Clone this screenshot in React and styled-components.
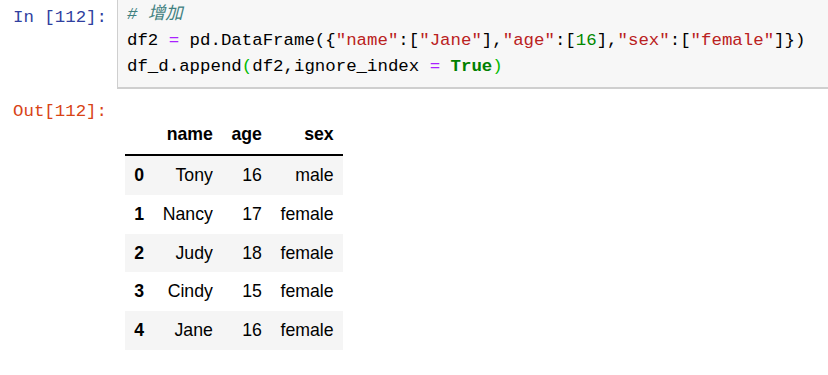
import styled, {createGlobalStyle} from 'styled-components';

const GlobalStyle = createGlobalStyle`
body{
  margin: 0;
  background: #fff;
  overflow: hidden;
}
`;

const Notebook = styled.div`
margin-top: -6px;
width: 840px;
`;

const CellRow = styled.div`
display: flex;
align-items: flex-start;
`;

const Prompt = styled.div`
width: 117px;
flex: none;
box-sizing: border-box;
padding: ${p => p.$top}px 10px 0 0;
text-align: right;
font-family: "Liberation Mono", "DejaVu Sans Mono", monospace;
font-size: 17.4px;
line-height: 26px;
color: ${p => p.$out ? "#d84315" : "#303f9f"};
white-space: pre;
`;

const CodeBox = styled.div`
flex: 1;
background: #f7f7f7;
border: 1px solid #cfcfcf;
border-bottom-width: 2px;
padding: 7px 9px;
font-family: "Liberation Mono", "Noto Sans CJK SC", monospace;
font-size: 17.4px;
line-height: 26px;
color: #000;
white-space: pre;
`;

const Line = styled.div`
height: 26px;
`;

const Tok = styled.span`
color: ${p => ({
  comment: "#408080",
  op: "#aa22ff",
  str: "#ba2121",
  num: "#008800",
  kw: "#008000",
  match: "#00bb00",
}[p.$k] || "#000")};
font-style: ${p => p.$k === "comment" ? "italic" : "normal"};
font-weight: ${p => p.$k === "kw" ? "bold" : "normal"};
`;

const Output = styled.div`
flex: 1;
padding: 26px 0 0 8px;
`;

const Table = styled.table`
border-collapse: collapse;
border-spacing: 0;
font-family: "Liberation Sans", Arial, sans-serif;
font-size: 17.7px;
color: #000;
`;

const HeadCell = styled.th`
padding: 0 9.3px;
line-height: 39px;
text-align: right;
font-weight: bold;
border-bottom: 2px solid #000;
`;

const BodyRow = styled.tr`
background: ${p => p.$odd ? "#fff" : "#f5f5f5"};
`;

const IndexCell = styled.th`
padding: 0 9.3px;
line-height: 38.8px;
text-align: right;
font-weight: bold;
`;

const Cell = styled.td`
padding: 0 9.3px;
line-height: 38.8px;
text-align: right;
`;

const rows = [
  ["Tony", 16, "male"],
  ["Nancy", 17, "female"],
  ["Judy", 18, "female"],
  ["Cindy", 15, "female"],
  ["Jane", 16, "female"],
];

export default function App() {
  return (
    <Notebook>
      <GlobalStyle/>
      <CellRow>
        <Prompt $top={11}>In [112]:</Prompt>
        <CodeBox>
          <Line><Tok $k="comment"># 增加</Tok></Line>
          <Line>
            df2 <Tok $k="op">=</Tok> pd.DataFrame({"{"}
            <Tok $k="str">"name"</Tok>:[<Tok $k="str">"Jane"</Tok>],
            <Tok $k="str">"age"</Tok>:[<Tok $k="num">16</Tok>],
            <Tok $k="str">"sex"</Tok>:[<Tok $k="str">"female"</Tok>]{"})"}
          </Line>
          <Line>
            df_d.append<Tok $k="match">(</Tok>df2,ignore_index <Tok $k="op">=</Tok> <Tok $k="kw">True</Tok><Tok $k="match">)</Tok>
          </Line>
        </CodeBox>
      </CellRow>
      <CellRow>
        <Prompt $top={10} $out>Out[112]:</Prompt>
        <Output>
          <Table>
            <thead>
              <tr>
                <HeadCell></HeadCell>
                <HeadCell>name</HeadCell>
                <HeadCell>age</HeadCell>
                <HeadCell>sex</HeadCell>
              </tr>
            </thead>
            <tbody>
              {rows.map((r, i) => (
                <BodyRow key={i} $odd={i % 2 === 1}>
                  <IndexCell>{i}</IndexCell>
                  <Cell>{r[0]}</Cell>
                  <Cell>{r[1]}</Cell>
                  <Cell>{r[2]}</Cell>
                </BodyRow>
              ))}
            </tbody>
          </Table>
        </Output>
      </CellRow>
    </Notebook>
  );
}
